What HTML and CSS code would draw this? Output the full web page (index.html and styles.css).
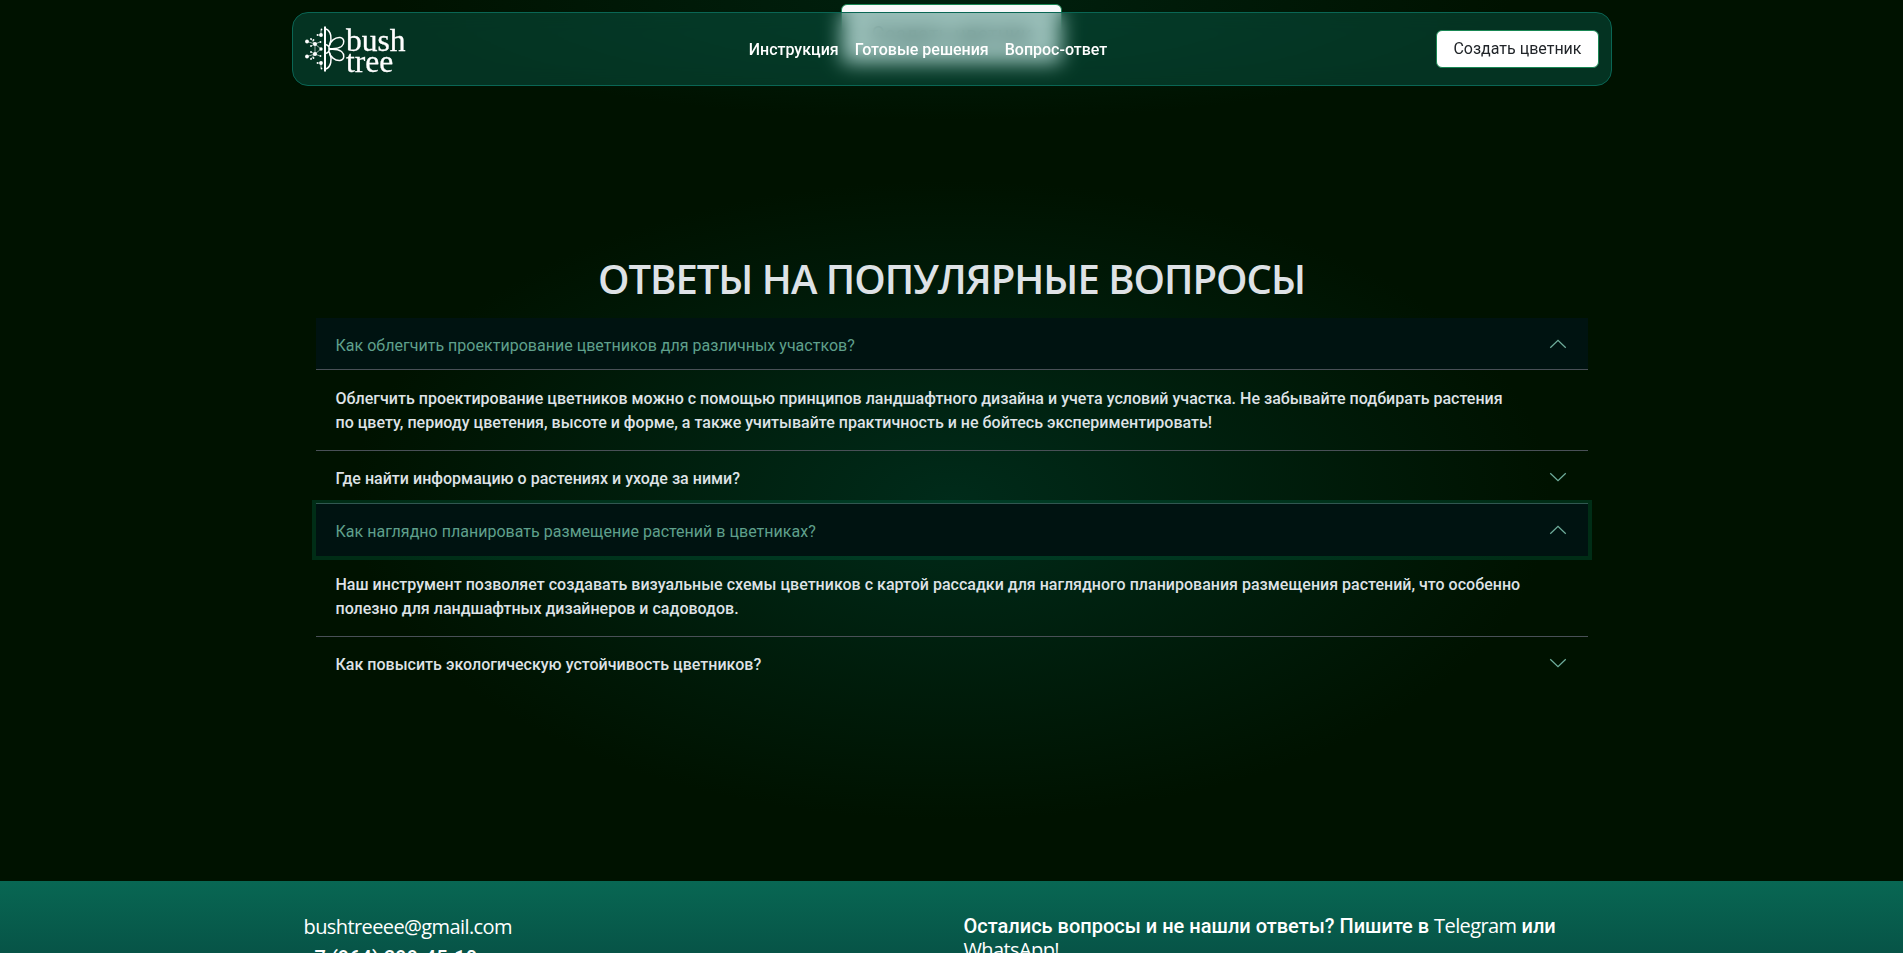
FILE: index.html
```html
<!DOCTYPE html>
<html lang="ru">
<head>
<meta charset="utf-8">
<title>bush tree</title>
<link rel="stylesheet" href="styles.css">
</head>
<body>
<a class="cta-behind" href="#">Создать цветник</a>
<header class="nav">
  <a class="logo" href="#" aria-label="bush tree">
    <svg class="logo-mark" width="42" height="48" viewBox="0 0 42 48">
      <g fill="none" stroke="#fff" stroke-width="1.5">
        <path d="M20 1.500v45" stroke-width="2"/>
        <path d="M21 4c5 2 6.500 10 3.500 16M21 44c5-2 6.500-10 3.500-16"/>
        <path d="M20.500 19.500c5 1 5 8 0 9"/>
        <path d="M24 21.500c1-5 6-9.500 11-9 5 .7 4.500 6.500 1.500 9-3 2-8 2.500-13 2M24 26.500c1 5 6 9.500 11 9 5-.7 4.500-6.500 1.500-9-3-2-8-2.500-13-2"/>
      </g>
      <path fill="none" stroke="#fff" stroke-width=".6" d="M2 16.500l8 2.500 6 5-6 5-8 2.500M10 19l-4-5M10 19l-4 2M10 19v10M10 29l-4 5M10 29l-4-2M10 19l5-2M10 29l5 2M16 10v-5M16 38v5M13 10h3M13 38h3"/>
      <g fill="#fff"><circle cx="2" cy="16.500" r="1.900"/><circle cx="2" cy="31.500" r="1.900"/><circle cx="10" cy="19" r="2"/><circle cx="10" cy="29" r="2"/><circle cx="16" cy="24" r="1.700"/><circle cx="16" cy="10" r="1.900"/><circle cx="16" cy="38" r="1.900"/><circle cx="6" cy="14" r=".9"/><circle cx="6" cy="21" r=".9"/><circle cx="6" cy="27" r=".9"/><circle cx="6" cy="34" r=".9"/><circle cx="8.500" cy="15" r=".9"/><circle cx="8.500" cy="33" r=".9"/><circle cx="15.500" cy="17" r=".9"/><circle cx="15.500" cy="31" r=".9"/><circle cx="12.500" cy="10" r=".9"/><circle cx="12.500" cy="38" r=".9"/><circle cx="16.500" cy="4.500" r=".9"/><circle cx="16.500" cy="43.500" r=".9"/></g>
    </svg>
    <span class="logo-text">bush<br>tree</span>
  </a>
  <nav class="menu"><a href="#">Инструкция</a><a href="#">Готовые решения</a><a href="#">Вопрос-ответ</a></nav>
  <a class="create" href="#">Создать цветник</a>
</header>
<main class="faq">
  <h2 class="title">ОТВЕТЫ НА ПОПУЛЯРНЫЕ ВОПРОСЫ</h2>
  <div class="accordion">
    <section class="item">
      <button class="question open">Как облегчить проектирование цветников для различных участков?<svg class="chevron" viewBox="0 0 16 16"><path d="M1.800 11 8 5l6.200 6"/></svg></button>
      <p class="answer">Облегчить проектирование цветников можно с помощью принципов ландшафтного дизайна и учета условий участка. Не забывайте подбирать растения<br>по цвету, периоду цветения, высоте и форме, а также учитывайте практичность и не бойтесь экспериментировать!</p>
    </section>
    <section class="item">
      <button class="question">Где найти информацию о растениях и уходе за ними?<svg class="chevron" viewBox="0 0 16 16"><path d="M1.800 5 8 11l6.200-6"/></svg></button>
    </section>
    <section class="item">
      <button class="question open focused">Как наглядно планировать размещение растений в цветниках?<svg class="chevron" viewBox="0 0 16 16"><path d="M1.800 11 8 5l6.200 6"/></svg></button>
      <p class="answer">Наш инструмент позволяет создавать визуальные схемы цветников с картой рассадки для наглядного планирования размещения растений, что особенно<br>полезно для ландшафтных дизайнеров и садоводов.</p>
    </section>
    <section class="item">
      <button class="question">Как повысить экологическую устойчивость цветников?<svg class="chevron" viewBox="0 0 16 16"><path d="M1.800 5 8 11l6.200-6"/></svg></button>
    </section>
  </div>
</main>
<footer class="footer">
  <div class="footer-grid">
    <div class="contacts"><span class="email">bushtreeee@gmail.com</span><span class="phone">+7 (964) 299-45-10</span></div>
    <div class="ask">Остались вопросы и не нашли ответы? Пишите в <span class="latin">Telegram</span> или<br><span class="latin">WhatsApp!</span></div>
  </div>
</footer>
</body>
</html>
```

FILE: styles.css
```css
* { box-sizing: border-box; }
html, body { height: 100%; overflow: hidden; }
body {
  margin: 0;
  display: flex;
  flex-direction: column;
  background: #001200;
  color: #dee2e6;
  font: 500 16px/24px Roboto, sans-serif;
}
a { color: inherit; text-decoration: none; }
.cta-behind {
  position: absolute;
  left: 841px;
  top: 4px;
  width: 221px;
  height: 60px;
  border: 1px solid #198754;
  border-radius: 6px;
  background: #f8f8fa;
  color: #212529;
  font-size: 20px;
  font-weight: 400;
  line-height: 58px;
  text-align: center;
}
.nav {
  position: absolute;
  z-index: 2;
  left: 292px;
  top: 12px;
  width: 1320px;
  height: 74px;
  padding: 0 12px;
  display: grid;
  grid-template-columns: 1fr auto 1fr;
  align-items: center;
  border: 1px solid #0a6654;
  border-radius: 16px;
  background: rgba(9, 102, 84, .4);
  backdrop-filter: blur(10px);
  color: #fff;
}
.logo { display: flex; align-items: center; }
.logo-mark { overflow: visible; margin-right: -1px; }
.logo-text {
  padding-top: 4px;
  font: 400 31.500px/21.500px "Liberation Serif", serif;
  -webkit-text-stroke: .3px #fff;
}
.menu { display: flex; gap: 16px; margin: 2px 48px 0 0; }
.create {
  justify-self: end;
  padding: 6px 16.500px;
  border: 1px solid #198754;
  border-radius: 6px;
  background: #fff;
  color: #212529;
  font-weight: 400;
}
.faq {
  height: 881px;
  flex: none;
  padding-top: 255px;
  background:
    radial-gradient(ellipse 560px 120px at 50% 0, rgba(0, 43, 25, .6), rgba(0, 43, 25, 0)),
    radial-gradient(ellipse 600px 320px at 50% 500px, #002b1a 0%, #001200 100%);
}
.title {
  margin: 0 0 15px;
  text-align: center;
  font: 600 40px/48px "Open Sans", sans-serif;
  letter-spacing: -1px;
}
.accordion { width: 1272px; margin: 0 auto; }
.item + .item { border-top: 1px solid #495057; }
.question {
  display: flex;
  width: 100%;
  height: 52px;
  padding: 3px 20px 0;
  align-items: center;
  justify-content: space-between;
  border: 0;
  background: none;
  color: inherit;
  font: inherit;
  letter-spacing: .02px;
}
.question.open {
  background: #001311;
  color: #5fa08c;
  font-weight: 400;
  box-shadow: inset 0 -1px #495057;
}
.question.focused { box-shadow: 0 0 0 4px rgba(0, 102, 68, .32); }
.chevron { width: 20px; height: 20px; margin-bottom: 4px; fill: none; stroke: #6fae9c; }
.answer { margin: 0; padding: 17px 20px 15px; letter-spacing: .012px; }
.footer {
  flex: 1;
  padding-top: 33px;
  overflow: hidden;
  background: linear-gradient(#086753, #075447);
  color: #fff;
  font-size: 20px;
}
.footer-grid {
  width: 1320px;
  margin: 0 auto;
  padding-left: 12px;
  display: grid;
  grid-template-columns: 660px 1fr;
}
.contacts { display: flex; flex-direction: column; gap: 5px; line-height: 26px; }
.email, .latin { font-family: "Open Sans", sans-serif; font-weight: 400; letter-spacing: -.6px; }
```
